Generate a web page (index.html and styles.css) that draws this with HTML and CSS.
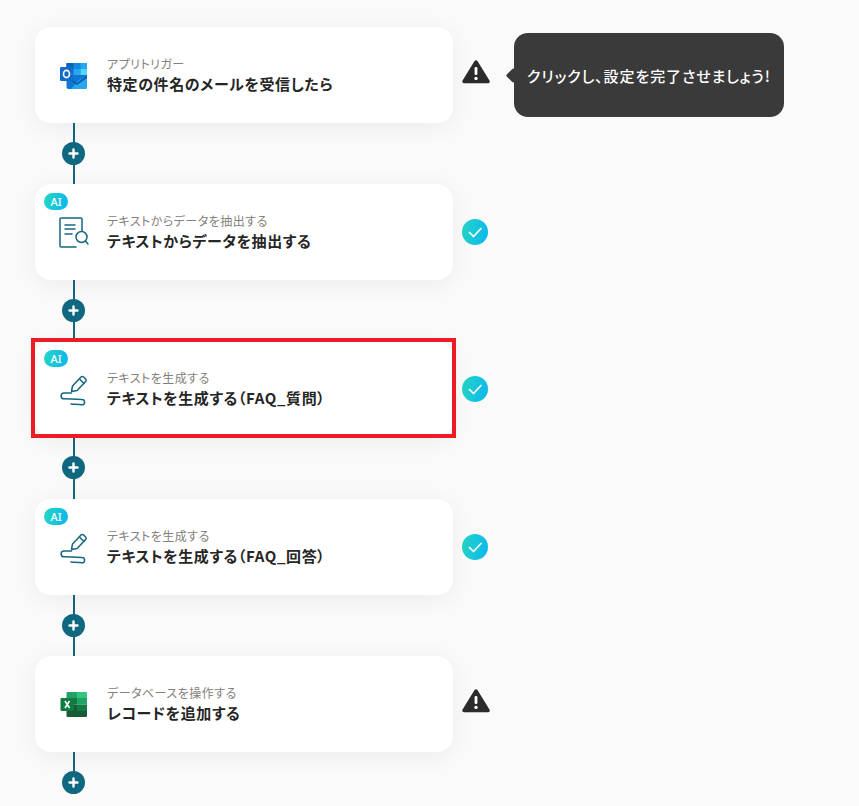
FILE: index.html
```html
<!DOCTYPE html>
<html lang="ja">
<head>
<meta charset="utf-8">
<title>フロー</title>
<link rel="stylesheet" href="styles.css">
</head>
<body>
<main class="flow">
  <section class="step">
    <div class="card">
      <svg class="icon" viewBox="0 0 32 32">
        <path d="M10.500 4h17.500a2 2 0 0 1 2 2v10H9.500V5a1 1 0 0 1 1-1z" fill="#0f78d4"/>
        <rect x="9.500" y="4" width="7" height="6" fill="#0364b8"/>
        <rect x="16.500" y="4" width="7" height="6" fill="#0f8ae0"/>
        <rect x="23.500" y="4" width="6.500" height="6" fill="#28a8ea"/>
        <rect x="16.500" y="10" width="7" height="6" fill="#28a8ea"/>
        <rect x="23.500" y="10" width="6.500" height="6" fill="#50d9ff"/>
        <path d="M9.500 16H30v12a2 2 0 0 1-2 2H11.500a2 2 0 0 1-2-2z" fill="#0f78d4"/>
        <path d="M30 16v12a2 2 0 0 1-2 2H14l7-8z" fill="#28a8ea"/>
        <path d="M9.500 17l10.500 7 10-8v3l-10 7-10.500-7z" fill="#0a5fb0"/>
        <rect x="3" y="8" width="13" height="14" rx="1.200" fill="#0f6cc8"/>
        <ellipse cx="9.500" cy="15" rx="3" ry="3.600" fill="none" stroke="#fff" stroke-width="1.700"/>
      </svg>
      <div class="text">
        <p class="sub">アプリトリガー</p>
        <p class="title">特定の件名のメールを受信したら</p>
      </div>
    </div>
    <svg class="status warn" viewBox="0 0 28 24">
      <path d="M14 2L26 21.5H2z" fill="#2b2b2b" stroke="#2b2b2b" stroke-width="3.400" stroke-linejoin="round"/>
      <rect x="12.600" y="7" width="2.800" height="8" rx="1.200" fill="#fff"/>
      <circle cx="14" cy="18.400" r="1.700" fill="#fff"/>
    </svg>
    <div class="tip">クリックし、設定を完了させましょう!</div>
  </section>
  <div class="link"><span class="plus"><svg viewBox="0 0 23 23"><path d="M11.500 7.500v8M7.500 11.500h8"/></svg></span></div>

  <section class="step">
    <div class="card">
      <span class="ai">AI</span>
      <svg class="icon line" viewBox="0 0 32 32">
        <path d="M19 31H4a1 1 0 0 1-1-1V3a1 1 0 0 1 1-1h20a1 1 0 0 1 1 1v11.500"/>
        <path d="M8 9h10M8 13h10M8 18h7"/>
        <circle cx="24.500" cy="21" r="5.500"/>
        <path d="M28.500 25l2.500 3"/>
      </svg>
      <div class="text">
        <p class="sub">テキストからデータを抽出する</p>
        <p class="title">テキストからデータを抽出する</p>
      </div>
    </div>
    <span class="status check"><svg viewBox="0 0 26 26"><path d="M7.500 13.500l4 4 7.500-8"/></svg></span>
  </section>
  <div class="link"><span class="plus"><svg viewBox="0 0 23 23"><path d="M11.500 7.500v8M7.500 11.500h8"/></svg></span></div>

  <section class="step">
    <div class="card marked">
      <span class="ai">AI</span>
      <svg class="icon line" viewBox="0 0 32 32">
        <path d="M14.500 18.500l1-5.500 8.500-9a1.800 1.800 0 0 1 2.600 0l2 2a1.800 1.800 0 0 1 0 2.600l-8.500 9z"/>
        <path d="M22.500 6l4.500 4.500"/>
        <path d="M14.500 20H7a2.800 2.800 0 0 0 0 5.800c6 0 12 .4 18 .8a2.600 2.600 0 0 1 0 5.200c-4 0-7-.5-11-.8"/>
      </svg>
      <div class="text">
        <p class="sub">テキストを生成する</p>
        <p class="title">テキストを生成する（FAQ_質問）</p>
      </div>
    </div>
    <span class="status check"><svg viewBox="0 0 26 26"><path d="M7.500 13.500l4 4 7.500-8"/></svg></span>
  </section>
  <div class="link"><span class="plus"><svg viewBox="0 0 23 23"><path d="M11.500 7.500v8M7.500 11.500h8"/></svg></span></div>

  <section class="step">
    <div class="card">
      <span class="ai">AI</span>
      <svg class="icon line" viewBox="0 0 32 32">
        <path d="M14.500 18.500l1-5.500 8.500-9a1.800 1.800 0 0 1 2.600 0l2 2a1.800 1.800 0 0 1 0 2.600l-8.500 9z"/>
        <path d="M22.500 6l4.500 4.500"/>
        <path d="M14.500 20H7a2.800 2.800 0 0 0 0 5.800c6 0 12 .4 18 .8a2.600 2.600 0 0 1 0 5.200c-4 0-7-.5-11-.8"/>
      </svg>
      <div class="text">
        <p class="sub">テキストを生成する</p>
        <p class="title">テキストを生成する（FAQ_回答）</p>
      </div>
    </div>
    <span class="status check"><svg viewBox="0 0 26 26"><path d="M7.500 13.500l4 4 7.500-8"/></svg></span>
  </section>
  <div class="link"><span class="plus"><svg viewBox="0 0 23 23"><path d="M11.500 7.500v8M7.500 11.500h8"/></svg></span></div>

  <section class="step">
    <div class="card">
      <svg class="icon" viewBox="0 0 32 32">
        <path d="M10.500 4H20v6H9.500V5a1 1 0 0 1 1-1z" fill="#21a366"/>
        <path d="M20 4h9a1 1 0 0 1 1 1v5H20z" fill="#33c481"/>
        <rect x="9.500" y="10" width="10.500" height="6.500" fill="#107c41"/>
        <rect x="20" y="10" width="10" height="6.500" fill="#21a366"/>
        <rect x="9.500" y="16.500" width="10.500" height="6.500" fill="#185c37"/>
        <rect x="20" y="16.500" width="10" height="6.500" fill="#107c41"/>
        <path d="M9.500 23H30v5a1 1 0 0 1-1 1H10.500a1 1 0 0 1-1-1z" fill="#185c37"/>
        <rect x="3.500" y="10" width="13.500" height="13" rx="1.200" fill="#107c41"/>
        <path d="M8 13l4.500 7M12.500 13L8 20" stroke="#fff" stroke-width="1.500" fill="none"/>
      </svg>
      <div class="text">
        <p class="sub">データベースを操作する</p>
        <p class="title">レコードを追加する</p>
      </div>
    </div>
    <svg class="status warn" viewBox="0 0 28 24">
      <path d="M14 2L26 21.5H2z" fill="#2b2b2b" stroke="#2b2b2b" stroke-width="3.400" stroke-linejoin="round"/>
      <rect x="12.600" y="7" width="2.800" height="8" rx="1.200" fill="#fff"/>
      <circle cx="14" cy="18.400" r="1.700" fill="#fff"/>
    </svg>
  </section>
  <div class="link last"><span class="plus"><svg viewBox="0 0 23 23"><path d="M11.500 7.500v8M7.500 11.500h8"/></svg></span></div>
</main>
</body>
</html>
```

FILE: styles.css
```css
* { box-sizing: border-box; }

html, body {
  margin: 0;
  height: 806px;
  overflow: hidden;
  background: #fafafa;
}

body {
  font-family: "Noto Sans CJK JP", "Noto Sans", sans-serif;
  font-feature-settings: "palt";
  color: #2b2b2b;
}

.flow {
  padding: 27px 0 0 35px;
  display: flex;
  flex-direction: column;
}

.step {
  position: relative;
  display: flex;
  align-items: center;
  gap: 9px;
}

.card {
  position: relative;
  width: 418px;
  height: 96px;
  padding-left: 22px;
  display: flex;
  align-items: center;
  gap: 18px;
  background: #fff;
  border-radius: 16px;
  box-shadow: 0 4px 24px rgba(0, 0, 0, 0.06);
}

.marked::after {
  content: "";
  position: absolute;
  inset: -3px -2.5px -0.5px -4.5px;
  border: 4px solid #ed1c24;
}

.icon {
  width: 32px;
  height: 32px;
  flex: none;
  overflow: visible;
}

.line {
  fill: none;
  stroke: #14677f;
  stroke-width: 1.5;
  stroke-linecap: round;
  stroke-linejoin: round;
}

.text {
  display: flex;
  flex-direction: column;
  gap: 1px;
  padding-top: 1px;
}

.sub {
  margin: 0;
  font-size: 12px;
  line-height: 16px;
  letter-spacing: 0.04em;
  color: #84807c;
}

.title {
  margin: 0;
  font-size: 15px;
  line-height: 22px;
  letter-spacing: 0.04em;
  font-weight: 700;
  color: #262626;
}

.ai {
  position: absolute;
  left: 9px;
  top: 9px;
  width: 24px;
  height: 17px;
  border-radius: 9px;
  background: linear-gradient(100deg, #26d6c2, #0bb6f0);
  color: #fff;
  font-family: "Noto Sans", sans-serif;
  font-size: 11px;
  font-weight: 500;
  line-height: 17px;
  text-align: center;
}

.status {
  flex: none;
  width: 28px;
  height: 24px;
}

.warn {
  margin-top: -6px;
}

.check {
  width: 26px;
  height: 26px;
  border-radius: 50%;
  background: linear-gradient(100deg, #26d6c2, #0bb6f0);
}

.check svg {
  display: block;
  width: 26px;
  height: 26px;
  fill: none;
  stroke: #fff;
  stroke-width: 1.7;
  stroke-linecap: round;
  stroke-linejoin: round;
}

.tip {
  position: absolute;
  left: 479px;
  top: 6px;
  width: 270px;
  height: 84px;
  display: flex;
  align-items: center;
  padding-left: 13px;
  background: #3a3a3a;
  border-radius: 14px;
  color: #fff;
  font-size: 15px;
  letter-spacing: 0.06em;
  font-weight: 500;
}

.tip::before {
  content: "";
  position: absolute;
  left: -6px;
  top: 37px;
  width: 11px;
  height: 11px;
  background: #3a3a3a;
  border-radius: 2px;
  transform: rotate(45deg);
}

.link {
  width: 77px;
  height: 61.2px;
  display: flex;
  align-items: center;
  justify-content: center;
  background: linear-gradient(#14677f, #14677f) 38px 0 / 2px 100% no-repeat;
}

.link.last {
  background-size: 2px 30px;
}

.plus {
  width: 23px;
  height: 23px;
  border-radius: 50%;
  background: #0f6880;
}

.plus svg {
  display: block;
  width: 23px;
  height: 23px;
  fill: none;
  stroke: #fff;
  stroke-width: 2.4;
  stroke-linecap: round;
}
```
